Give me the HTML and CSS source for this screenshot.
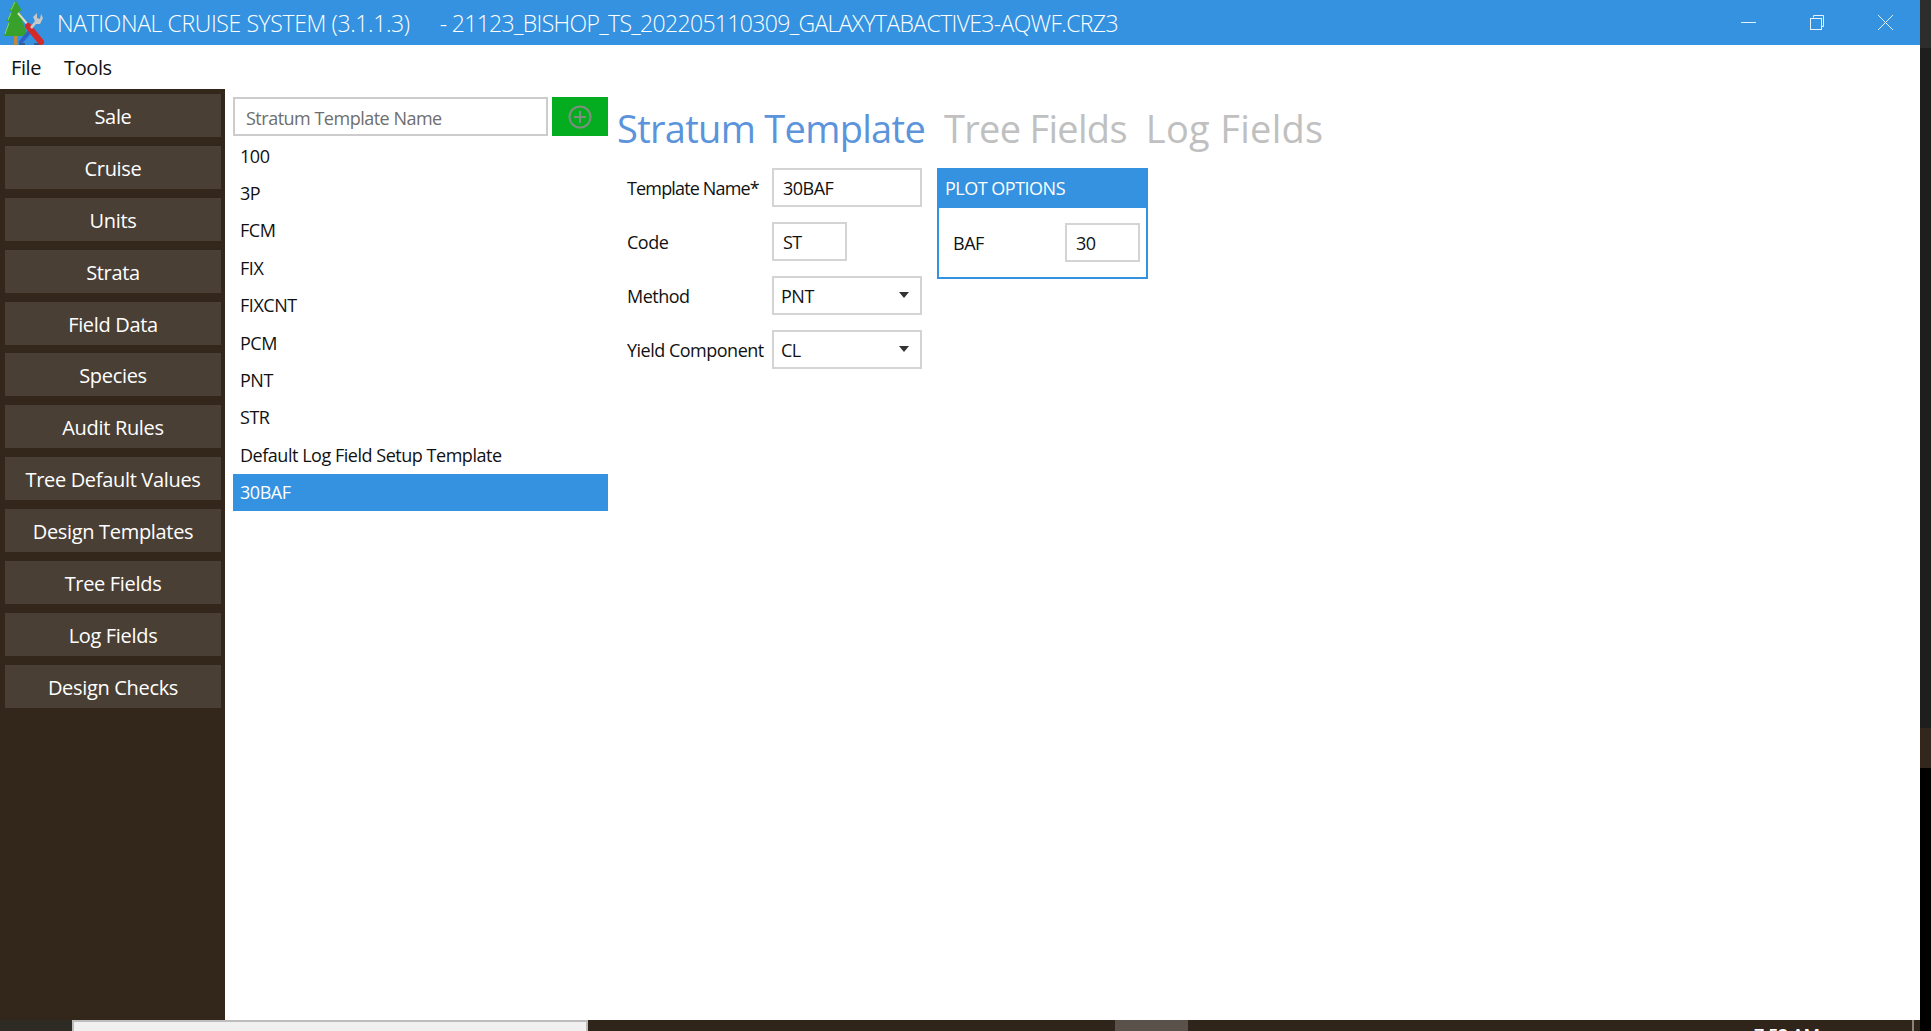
FILE: index.html
```html
<!DOCTYPE html>
<html lang="en">
<head>
    <meta charset="UTF-8">
    <title>National Cruise System</title>
    <link rel="stylesheet" href="styles.css">
</head>
<body>
    <div class="app">
        <header class="titlebar">
            <svg class="app-icon" width="46" height="45" viewBox="0 0 46 45">
                <rect x="14" y="34" width="3.5" height="11" fill="#c08a3a"/>
                <polygon points="15.5,0 22,11 19,11 25,21 22,21 28,36 4,36 9,21 6,21 12,11 9,11" fill="#37a12b"/>
                <path d="M15 2 L11 10 M11 13 L8 20 M9 23 L5 34" stroke="#86d66f" stroke-width="1"/>
                <path d="M19 44 L25 44 M34 44 L42 44" stroke="#2a4f78" stroke-width="1.5"/>
                <path d="M20 43 L31 30" stroke="#2f62c4" stroke-width="4"/>
                <path d="M18 13 L28 25" stroke="#dcdcc8" stroke-width="2"/>
                <path d="M28 26 L41 42" stroke="#d42a2a" stroke-width="6" stroke-linecap="round"/>
                <path d="M30 27 L35 21 L33 17 L37 13 L37 18 L40 19 L41 14 L43 18 L40 24 L36 24 L32 29 Z" fill="#c8c8c8"/>
            </svg>
            <span class="title-text">NATIONAL CRUISE SYSTEM (3.1.1.3)</span>
            <span class="title-text file-name">- 21123_BISHOP_TS_202205110309_GALAXYTABACTIVE3-AQWF.CRZ3</span>
            <div class="window-btns">
                <svg width="15" height="15" viewBox="0 0 15 15"><path d="M0 7.5H15" stroke="#e8f2fb" stroke-width="1"/></svg>
                <svg width="14" height="15" viewBox="0 0 14 15"><path d="M3.5 2.5V0.5H13.5V11.5H11.5" fill="none" stroke="#e8f2fb"/><rect x="0.5" y="3.5" width="11" height="11" fill="none" stroke="#e8f2fb"/></svg>
                <svg width="15" height="15" viewBox="0 0 15 15"><path d="M0 0L15 15M15 0L0 15" stroke="#e8f2fb" stroke-width="1"/></svg>
            </div>
        </header>

        <nav class="menubar">
            <span>File</span>
            <span>Tools</span>
        </nav>

        <div class="main">
            <aside class="sidebar">
                <div class="nav-btn">Sale</div>
                <div class="nav-btn">Cruise</div>
                <div class="nav-btn">Units</div>
                <div class="nav-btn">Strata</div>
                <div class="nav-btn">Field Data</div>
                <div class="nav-btn">Species</div>
                <div class="nav-btn">Audit Rules</div>
                <div class="nav-btn">Tree Default Values</div>
                <div class="nav-btn">Design Templates</div>
                <div class="nav-btn">Tree Fields</div>
                <div class="nav-btn">Log Fields</div>
                <div class="nav-btn">Design Checks</div>
            </aside>

            <section class="template-list">
                <div class="add-row">
                    <div class="name-input">Stratum Template Name</div>
                    <div class="add-btn">
                        <svg width="24" height="24" viewBox="0 0 24 24"><circle cx="12" cy="12" r="10.5" fill="none" stroke="#7f8f7f" stroke-width="2"/><path d="M12 6V18M6 12H18" stroke="#7f8f7f" stroke-width="2"/></svg>
                    </div>
                </div>
                <div class="list-item">100</div>
                <div class="list-item">3P</div>
                <div class="list-item">FCM</div>
                <div class="list-item">FIX</div>
                <div class="list-item">FIXCNT</div>
                <div class="list-item">PCM</div>
                <div class="list-item">PNT</div>
                <div class="list-item">STR</div>
                <div class="list-item">Default Log Field Setup Template</div>
                <div class="list-item selected">30BAF</div>
            </section>

            <section class="detail">
                <div class="tabs">
                    <span class="tab active">Stratum Template</span>
                    <span class="tab">Tree Fields</span>
                    <span class="tab log">Log Fields</span>
                </div>
                <div class="detail-body">
                    <div class="fields">
                        <label class="tight">Template Name*</label>
                        <div class="field wide">30BAF</div>
                        <label>Code</label>
                        <div class="field narrow">ST</div>
                        <label>Method</label>
                        <div class="field wide select">PNT<i class="caret"></i></div>
                        <label>Yield Component</label>
                        <div class="field wide select">CL<i class="caret"></i></div>
                    </div>
                    <div class="plot-box">
                        <div class="plot-head">PLOT OPTIONS</div>
                        <div class="plot-row">
                            <label>BAF</label>
                            <div class="field narrow">30</div>
                        </div>
                    </div>
                </div>
            </section>
        </div>

        <footer class="under-strip">
            <div class="strip-left"></div>
            <div class="strip-window"></div>
            <div class="strip-gap"></div>
            <div class="strip-thumb"></div>
            <div class="strip-rest"><span class="clock">7:52 AM</span><i class="strip-tick"></i></div>
        </footer>
    </div>
    <div class="edge">
        <div class="edge-top"></div>
        <div class="edge-mid"></div>
        <div class="edge-brown"></div>
        <div class="edge-black"></div>
    </div>
</body>
</html>
```

FILE: styles.css
```css
* {
    box-sizing: border-box;
}

html, body {
    height: 100%;
}

body {
    margin: 0;
    display: flex;
    overflow: hidden;
    background-color: white;
    color: #111;
    font-family: "Open Sans", Arial, sans-serif;
    font-size: 18px;
    letter-spacing: -0.5px;
}

.app {
    width: 1920px;
    display: flex;
    flex-direction: column;
}

/* title bar */
.titlebar {
    height: 45px;
    flex: none;
    display: flex;
    align-items: center;
    background-color: #3492e0;
    color: white;
}

.app-icon {
    flex: none;
    margin-right: 11px;
}

.title-text {
    font-size: 23px;
    font-weight: 300;
    letter-spacing: -0.38px;
    white-space: pre;
}

.file-name {
    margin-left: 30px;
    letter-spacing: -0.66px;
}

.window-btns {
    margin-left: auto;
    display: flex;
    gap: 54px;
    padding-right: 27px;
}

/* menu */
.menubar {
    height: 44px;
    flex: none;
    display: flex;
    align-items: center;
    gap: 23px;
    padding-left: 11px;
    padding-top: 1px;
    font-size: 20px;
    letter-spacing: -0.4px;
}

.main {
    flex: 1;
    display: flex;
    min-height: 0;
}

/* left nav */
.sidebar {
    width: 225px;
    flex: none;
    display: flex;
    flex-direction: column;
    gap: 8.9px;
    padding: 5px 4px 0 5px;
    background-color: #33261a;
}

.nav-btn {
    height: 43px;
    flex: none;
    display: flex;
    align-items: center;
    justify-content: center;
    padding-top: 2px;
    background-color: #4a3f35;
    color: white;
    font-size: 20px;
    letter-spacing: -0.32px;
}

/* template list */
.template-list {
    width: 375px;
    flex: none;
    margin-left: 8px;
    padding-top: 8px;
}

.add-row {
    display: flex;
    gap: 4px;
    margin-bottom: 1px;
}

.name-input {
    width: 315px;
    height: 39px;
    display: flex;
    align-items: center;
    padding-left: 11px;
    padding-top: 2px;
    border: 2px solid #ccc;
    color: #6e6e6e;
}

.add-btn {
    width: 56px;
    height: 39px;
    display: flex;
    align-items: center;
    justify-content: center;
    background-color: #04ac1f;
}

.list-item {
    height: 37.4px;
    display: flex;
    align-items: center;
    padding-left: 7px;
    letter-spacing: -0.47px;
}

.list-item.selected {
    background-color: #3492e0;
    color: white;
}

/* right side */
.detail {
    flex: 1;
    padding-left: 9px;
}

.tabs {
    display: flex;
    gap: 19px;
    height: 79px;
    padding-top: 15px;
}

.tab {
    font-size: 38px;
    line-height: 48px;
    letter-spacing: -0.7px;
    color: #c0c0c0;
}

.tab.log {
    letter-spacing: 0.3px;
}

.tab.active {
    color: #5c94dc;
}

.detail-body {
    display: flex;
    align-items: flex-start;
    gap: 15px;
    padding-left: 10px;
}

.fields {
    display: grid;
    grid-template-columns: 145px 150px;
    row-gap: 15px;
    align-items: center;
}

.tight {
    letter-spacing: -0.85px;
}

.field {
    height: 39px;
    display: flex;
    align-items: center;
    padding-left: 9px;
    border: 2px solid #d4d4d4;
    position: relative;
}

.field.wide {
    width: 150px;
}

.field.narrow {
    width: 75px;
}

.field.select {
    padding-left: 7px;
}

.caret {
    position: absolute;
    right: 11px;
    top: 14px;
    border-left: 5.5px solid transparent;
    border-right: 5.5px solid transparent;
    border-top: 6px solid #333;
}

.plot-box {
    width: 211px;
    height: 111px;
    border: 2px solid #3492e0;
}

.plot-head {
    height: 38px;
    display: flex;
    align-items: center;
    padding-left: 6px;
    padding-bottom: 2px;
    background-color: #3492e0;
    color: white;
}

.plot-row {
    display: flex;
    align-items: center;
    justify-content: space-between;
    padding: 15px 6px 0 14px;
}

/* whatever sits behind the window */
.under-strip {
    height: 11px;
    flex: none;
    display: flex;
    overflow: hidden;
    background-color: #2f251b;
}

.strip-left {
    width: 72px;
    background-color: #2e2b25;
}

.strip-window {
    width: 516px;
    height: 11px;
    background-color: #f0f0f0;
    border: 2px solid #bdbdbd;
    border-bottom: none;
}

.strip-gap {
    width: 527px;
}

.strip-thumb {
    width: 73px;
    background-color: #5a524a;
}

.strip-rest {
    flex: 1;
    position: relative;
}

.clock {
    position: absolute;
    left: 566px;
    top: 6px;
    color: white;
    font-size: 18px;
    line-height: 18px;
    font-weight: 600;
    white-space: nowrap;
}

.strip-tick {
    position: absolute;
    right: 6px;
    top: 0;
    width: 2px;
    height: 11px;
    background-color: #8a8378;
}

.edge {
    width: 11px;
    flex: none;
    display: flex;
    flex-direction: column;
    background-color: black;
}

.edge-top {
    height: 48px;
    background-color: #2d2d2d;
}

.edge-mid {
    height: 680px;
    background-color: #1e1e1e;
}

.edge-brown {
    height: 40px;
    background-color: #33271d;
}

.edge-black {
    flex: 1;
}
```
